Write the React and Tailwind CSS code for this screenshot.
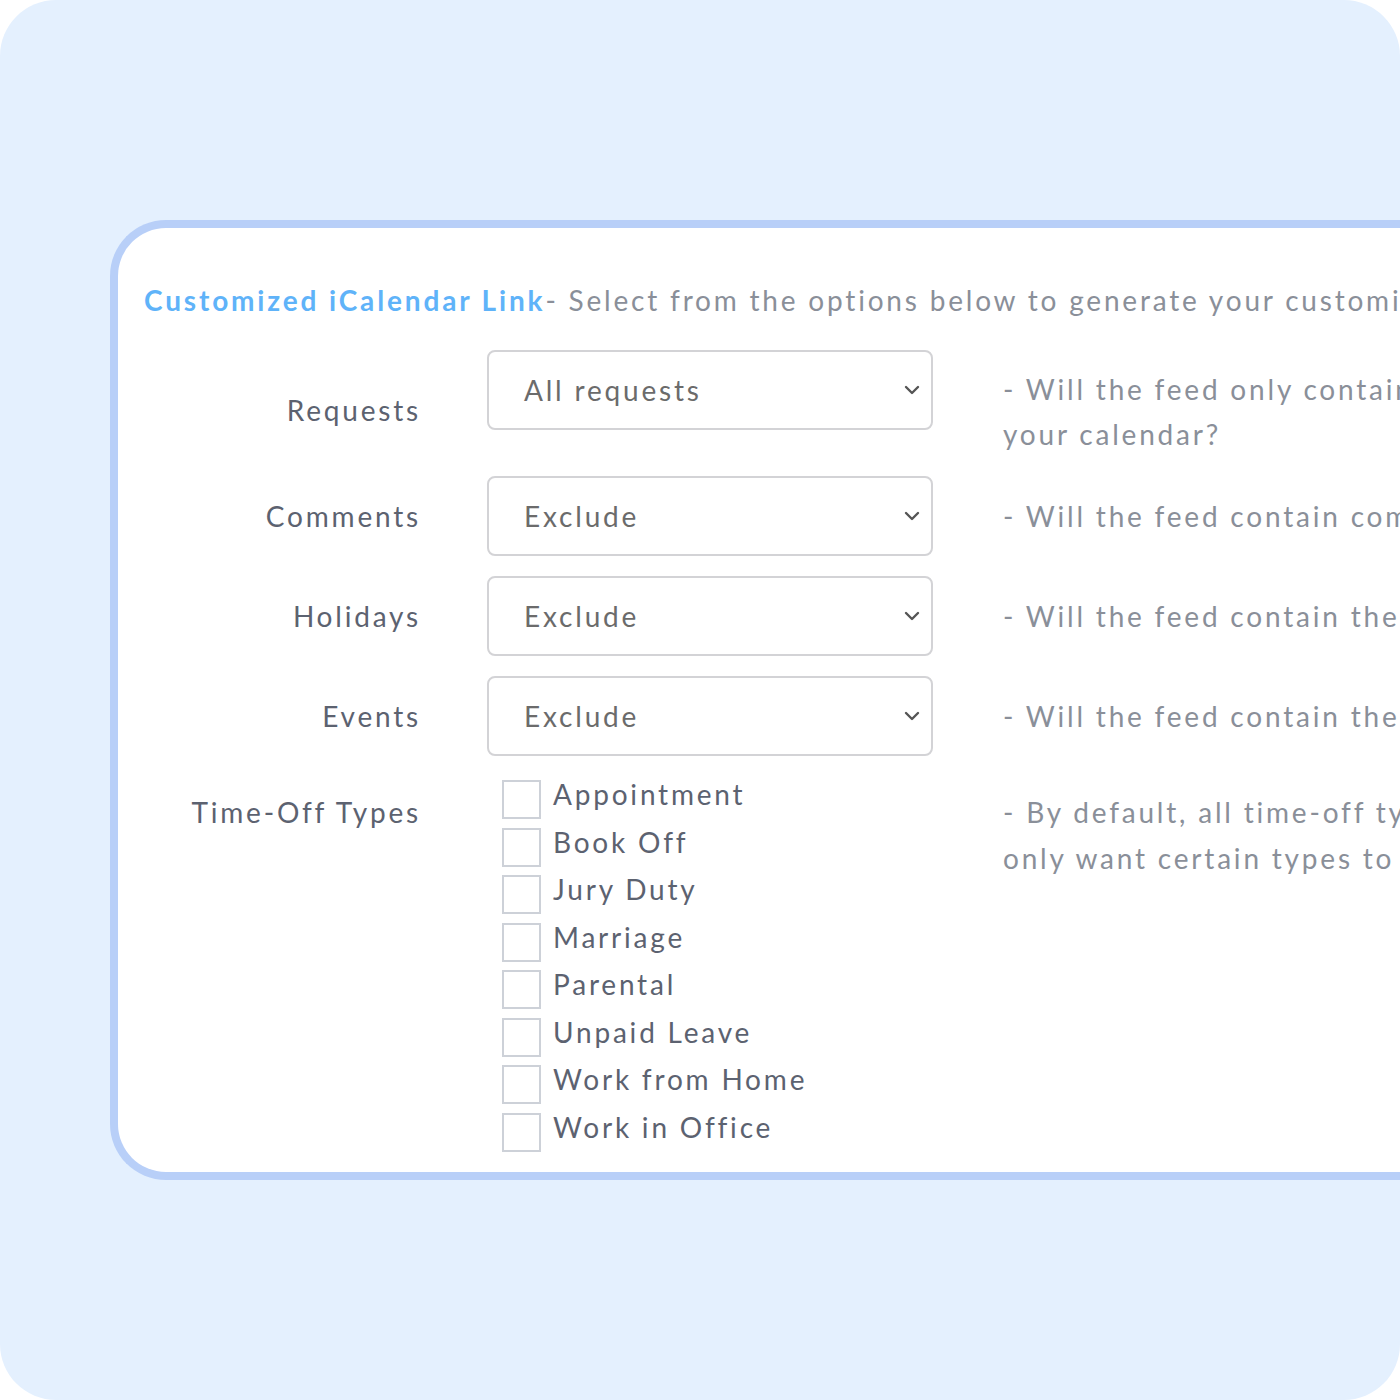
import React from "react";

const font = { fontFamily: "Lato, 'Open Sans', sans-serif" };

const Chevron = () => (
  <svg width="16" height="10" viewBox="0 0 16 10" fill="none">
    <path d="M2 2l6 6 6-6" stroke="#555" strokeWidth="2.4" strokeLinecap="round" strokeLinejoin="round" />
  </svg>
);

const Select = ({ value }) => (
  <div className="ml-[66px] flex h-[80px] w-[446px] shrink-0 items-center justify-between rounded-[8px] border-2 border-[#d3d3d6] pl-[35px] pr-[11px] text-[28px] text-[#6b6b6b]">
    <span>{value}</span>
    <Chevron />
  </div>
);

const types = [
  "Appointment",
  "Book Off",
  "Jury Duty",
  "Marriage",
  "Parental",
  "Unpaid Leave",
  "Work from Home",
  "Work in Office",
];

const App = () => {
  return (
    <div className="h-[1400px] w-[1400px] overflow-hidden rounded-[56px] bg-[#e4f0fe] pt-[220px] pl-[110px] tracking-[2.8px]" style={font}>
      <div className="h-[960px] w-[1400px] rounded-l-[56px] border-[8px] border-r-0 border-[#b8cff8] bg-white pl-[26px] pt-[48px]">
        <div className="whitespace-nowrap text-[28px] leading-[48px] text-[#8a8f99]">
          <span className="font-bold tracking-[2.85px] text-[#5fb3f9]">Customized iCalendar Link</span>
          - Select from the options below to generate your customized iCalendar link
        </div>

        <div className="-ml-[26px] mt-[26px] flex flex-col">
          {/* requests */}
          <div className="flex items-start">
            <div className="mt-[43px] w-[303px] shrink-0 text-right text-[28px] leading-[34px] text-[#5c6270]">Requests</div>
            <Select value="All requests" />
            <div className="ml-[70px] mt-[17px] whitespace-nowrap text-[28px] leading-[45px] text-[#8a8f99]">
              - Will the feed only contain approved requests, or all requests in
              <br />
              your calendar?
            </div>
          </div>

          <div className="mt-[19px] flex items-center">
            <div className="w-[303px] shrink-0 text-right text-[28px] leading-[34px] text-[#5c6270]">Comments</div>
            <Select value="Exclude" />
            <div className="ml-[70px] whitespace-nowrap text-[28px] leading-[45px] text-[#8a8f99]">
              - Will the feed contain comments on requests?
            </div>
          </div>

          <div className="mt-[20px] flex items-center">
            <div className="w-[303px] shrink-0 text-right text-[28px] leading-[34px] text-[#5c6270]">Holidays</div>
            <Select value="Exclude" />
            <div className="ml-[70px] whitespace-nowrap text-[28px] leading-[45px] text-[#8a8f99]">
              - Will the feed contain the public holidays?
            </div>
          </div>

          <div className="mt-[20px] flex items-center">
            <div className="w-[303px] shrink-0 text-right text-[28px] leading-[34px] text-[#5c6270]">Events</div>
            <Select value="Exclude" />
            <div className="ml-[70px] whitespace-nowrap text-[28px] leading-[45px] text-[#8a8f99]">
              - Will the feed contain the scheduled events?
            </div>
          </div>

          {/* time-off types */}
          <div className="mt-[24px] flex items-start">
            <div className="mt-[15px] w-[303px] shrink-0 text-right text-[28px] leading-[34px] text-[#5c6270]">Time-Off Types</div>
            <div className="ml-[81px] flex w-[431px] shrink-0 flex-col">
              {types.map((t) => (
                <label key={t} className="flex h-[47.5px] items-start">
                  <span className="block h-[39px] w-[39px] shrink-0 border-2 border-[#cdd1d8] bg-white" />
                  <span className="ml-[12px] -mt-[5px] whitespace-nowrap text-[28px] leading-[38px] text-[#5c6270]">{t}</span>
                </label>
              ))}
            </div>
            <div className="ml-[70px] mt-[9px] whitespace-nowrap text-[28px] leading-[46px] text-[#8a8f99]">
              - By default, all time-off types are included. Select if you
              <br />
              only want certain types to be included.
            </div>
          </div>
        </div>
      </div>
    </div>
  );
};

export default App;
